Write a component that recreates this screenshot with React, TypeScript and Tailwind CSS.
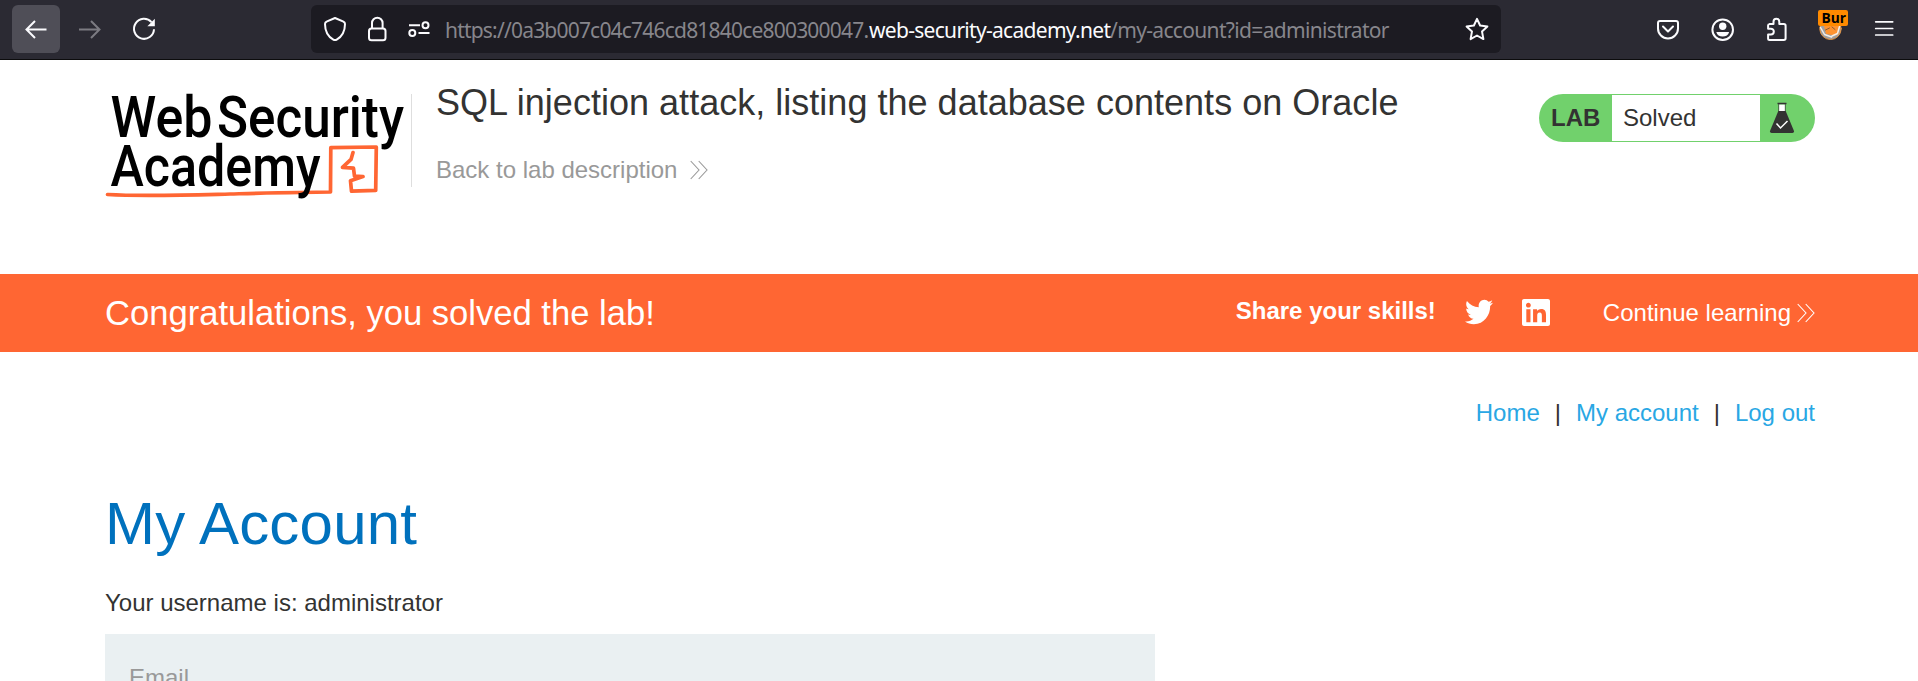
import React from "react";
import { FaTwitter, FaLinkedin } from "react-icons/fa";

function BrowserBar() {
  return (
    <header className="flex h-[60px] items-start border-b border-[#0c0c0d] bg-[#2b2a33] pl-3 pt-[5px] text-[#fbfbfe]">
      <button className="h-12 w-12 rounded-[6px] bg-[#4f4e57]" aria-label="Back">
        <svg className="block h-12 w-12" viewBox="12 5 48 48" fill="none" stroke="currentColor" strokeWidth="2">
          <path d="M46.5 29.5H27M35 21l-8.5 8.5L35 38" />
        </svg>
      </button>
      <button className="ml-1.5 h-12 w-12 text-[#7c7b82]" aria-label="Forward">
        <svg className="block h-12 w-12" viewBox="66 5 48 48" fill="none" stroke="currentColor" strokeWidth="2">
          <path d="M79 29.5H99M91 21l8.5 8.5L91 38" />
        </svg>
      </button>
      <button className="ml-1.5 h-12 w-12" aria-label="Reload">
        <svg className="block h-12 w-12" viewBox="120 5 48 48" fill="none" stroke="currentColor" strokeWidth="2">
          <path d="M151.5 22.2A10 10 0 1 0 154 29.2" />
          <path d="M154.8 18.8v7.4h-7.4z" fill="currentColor" stroke="none" />
        </svg>
      </button>
      <div className="ml-[143px] flex h-12 w-[1190px] items-center rounded-[6px] bg-[#1c1b22]">
        <svg className="ml-[9px] h-12 w-[117px] shrink-0" viewBox="320 5 117 48" fill="none" stroke="currentColor" strokeWidth="2" strokeLinejoin="round">
          <path d="M335 18l8.500 3.700q1.500.6 1.500 2.200c0 7-3 12.500-8.300 15.700q-1.700 1-3.400 0C328 36.400 325 30.900 325 23.900q0-1.600 1.500-2.200z" />
          <rect x="369" y="28.500" width="16.500" height="11.700" rx="2.500" />
          <path d="M372 28v-5a5.300 5.300 0 0 1 10.600 0v5" />
          <path d="M409 25.200h11M418.500 33h11" />
          <circle cx="425.500" cy="25.200" r="3" />
          <circle cx="412.300" cy="33" r="3" />
        </svg>
        <div className="ml-2 flex flex-1 whitespace-pre pt-0.5 font-['Noto_Sans',sans-serif] text-[21px] leading-[46px] text-[#87868c]">
          <span className="w-[424px] shrink-0 tracking-[-0.8px]">https://0a3b007c04c746cd81840ce800300047.</span>
          <span className="w-[241px] shrink-0 tracking-[-0.7px] text-[#fbfbfe]">web-security-academy.net</span>
          <span className="tracking-[-0.66px]">/my-account?id=administrator</span>
        </div>
        <svg className="mr-[9px] h-[30px] w-[30px]" viewBox="1461.500 14 30 30" fill="none" stroke="currentColor" strokeWidth="2" strokeLinejoin="round">
          <path d="M1476.500 18.900l3.100 6.600 7.300.9-5.400 5 1.400 7.700-6.400-3.600-6.400 3.600 1.400-7.700-5.400-5 7.300-.9z" />
        </svg>
      </div>
      <svg className="ml-[139px] h-12 w-[270px]" viewBox="1640 5 270 48" fill="none" stroke="currentColor" strokeWidth="2" strokeLinejoin="round" strokeLinecap="round">
        <path d="M1660 21h16q2 0 2 2v5.500a10 10 0 0 1-20 0V23q0-2 2-2z" />
        <path d="M1663 26.500l5 5 5-5" />
        <circle cx="1722.700" cy="29.700" r="10.300" />
        <circle cx="1722.700" cy="26.200" r="3.700" fill="currentColor" stroke="none" />
        <path d="M1716.300 32h12.800c-.6 3.200-3.200 4.600-6.400 4.600s-5.800-1.400-6.400-4.600z" fill="currentColor" stroke="none" />
        <path d="M1769.500 24h4v-2.300a2.900 2.900 0 0 1 5.800 0V24h4.500q1.800 0 1.800 1.800v12.400q0 1.800-1.800 1.800h-14.200q-1.500 0-1.500-1.500V34.500h2.800a2.900 2.900 0 0 0 0-5.800h-2.800V25.500q0-1.500 1.400-1.500z" />
        <circle cx="1830.500" cy="28.800" r="10.700" fill="#9d9fa2" stroke="#e8943e" strokeWidth="1" />
        <path d="M1824 26h15.500l-1 8-3.500 1.500-9-1.500z" fill="#ff9330" stroke="none" />
        <path d="M1820.500 27.500l4 7 7 2.500M1839.500 26.500l-2 7-5.500 2.500" stroke="#f6eee6" strokeWidth="1.500" />
        <path d="M1825.500 30l4-2M1832 27l3 2.500" stroke="#8a5d35" strokeWidth="1" />
        <rect x="1818" y="10" width="30" height="16" rx="2" fill="#ff8a00" stroke="none" />
        <text x="1821.500" y="23" textLength="24.500" lengthAdjust="spacingAndGlyphs" fill="#000" stroke="none" className="font-['Open_Sans',sans-serif] text-[15px] font-bold">Bur</text>
        <path d="M1875.700 21.800h17M1875.700 28.500h17M1875.700 35h17" strokeWidth="1.700" />
      </svg>
    </header>
  );
}

function Logo() {
  return (
    <svg className="h-[116px] w-[306px] shrink-0 overflow-visible" viewBox="105 86 306 116">
      <path
        d="M107.500 194.500C145 196.500 190 195 230 194S300 192.200 330.500 192l.3-44.300 45.500-.7-.6 43.400-24.200.8-1-10.500 12.500-4.200-8.500-.3-1-8-11-.8 8.500-8 2-6.800"
        fill="none"
        stroke="#ff6633"
        strokeWidth="3.700"
        strokeLinejoin="round"
        strokeLinecap="round"
      />
      <g className="font-['Roboto',sans-serif] text-[57px] font-medium" fill="#000">
        <text x="110.500" y="137" textLength="102" lengthAdjust="spacingAndGlyphs">Web</text>
        <text x="217" y="137" textLength="187" lengthAdjust="spacingAndGlyphs">Security</text>
        <text x="110.500" y="185.700" textLength="210" lengthAdjust="spacingAndGlyphs">Academy</text>
      </g>
    </svg>
  );
}

function Chevrons({ className }: { className: string }) {
  return (
    <svg className={className} viewBox="0 0 18 20" fill="none" stroke="currentColor" strokeWidth="1.100">
      <path d="M.7 1l8.300 9-8.300 9M8.700 1l8.300 9-8.300 9" />
    </svg>
  );
}

function LabHeader() {
  return (
    <section className="flex h-[214px] items-start pl-[105px] pr-[103px] pt-[26px]">
      <Logo />
      <div className="mt-2 h-[93px] w-px bg-[#dedede]" />
      <div className="ml-[24px] mt-[-3px] flex-1">
        <h2 className="whitespace-nowrap text-[36px] leading-10 tracking-[0.02px]">SQL injection attack, listing the database contents on Oracle</h2>
        <a className="mt-[33px] flex items-center text-2xl leading-7 text-[#999]">
          Back to lab description
          <Chevrons className="ml-[13px] h-5 w-[18px]" />
        </a>
      </div>
      <div className="mt-2 flex h-12 w-[276px] rounded-full bg-[#71d16c] py-px">
        <span className="w-[73px] pl-[12px] text-2xl font-bold leading-[46px]">LAB</span>
        <span className="w-[148px] bg-white pl-[11px] text-2xl leading-[46px]">Solved</span>
        <svg className="ml-[9px] mt-[7px] h-8 w-[26px]" viewBox="0 0 26 32">
          <path d="M10 2.500h6v9h-6z" fill="#fff" />
          <path d="M8.500 1.500h9" stroke="#333332" strokeWidth="1.500" />
          <path d="M9.700 2v8M16.300 2v8" stroke="#333332" strokeWidth=".7" />
          <path d="M9.300 9h7.400l8.200 19.700q.6 2.300-1.500 2.300H2.600q-2.100 0-1.500-2.300z" fill="#333332" />
          <path d="M7.500 21.500l4 4.500 7-7" fill="none" stroke="#fff" strokeWidth="1.500" />
        </svg>
      </div>
    </section>
  );
}

export default function App() {
  return (
    <div className="h-[681px] overflow-hidden bg-white font-['Liberation_Sans',Arial,sans-serif] text-[#333332]">
      <BrowserBar />
      <LabHeader />
      <section className="flex h-[78px] items-center bg-[#ff6633] pl-[105px] pr-[103px] text-white">
        <h4 className="flex-1 text-[34.6px] leading-10">Congratulations, you solved the lab!</h4>
        <span className="mb-1 text-2xl font-bold leading-7">Share your skills!</span>
        <FaTwitter className="mb-0.5 ml-[29px] h-[30px] w-[28px]" preserveAspectRatio="none" />
        <FaLinkedin className="mb-0.5 ml-[29px] h-[31px] w-[28px]" preserveAspectRatio="none" />
        <a className="ml-[53px] flex items-center text-2xl leading-7">
          Continue learning
          <Chevrons className="ml-[6px] h-5 w-[18px]" />
        </a>
      </section>
      <main className="pl-[105px] pr-[103px]">
        <nav className="flex justify-end gap-[15px] pt-[47px] text-2xl leading-7 text-[#29a7e4]">
          <a>Home</a>
          <span className="text-[#333332]">|</span>
          <a>My account</a>
          <span className="text-[#333332]">|</span>
          <a>Log out</a>
        </nav>
        <h1 className="mt-[61px] text-[60px] leading-[72px] tracking-[0.2px] text-[#0071bd]">My Account</h1>
        <p className="mt-[29px] text-2xl leading-7">Your username is: administrator</p>
        <form className="mt-[17px] h-[200px] w-[1050px] bg-[#eaf0f2] pl-6 pt-[30px]">
          <label className="text-2xl leading-7 text-[#999]">Email</label>
        </form>
      </main>
    </div>
  );
}
